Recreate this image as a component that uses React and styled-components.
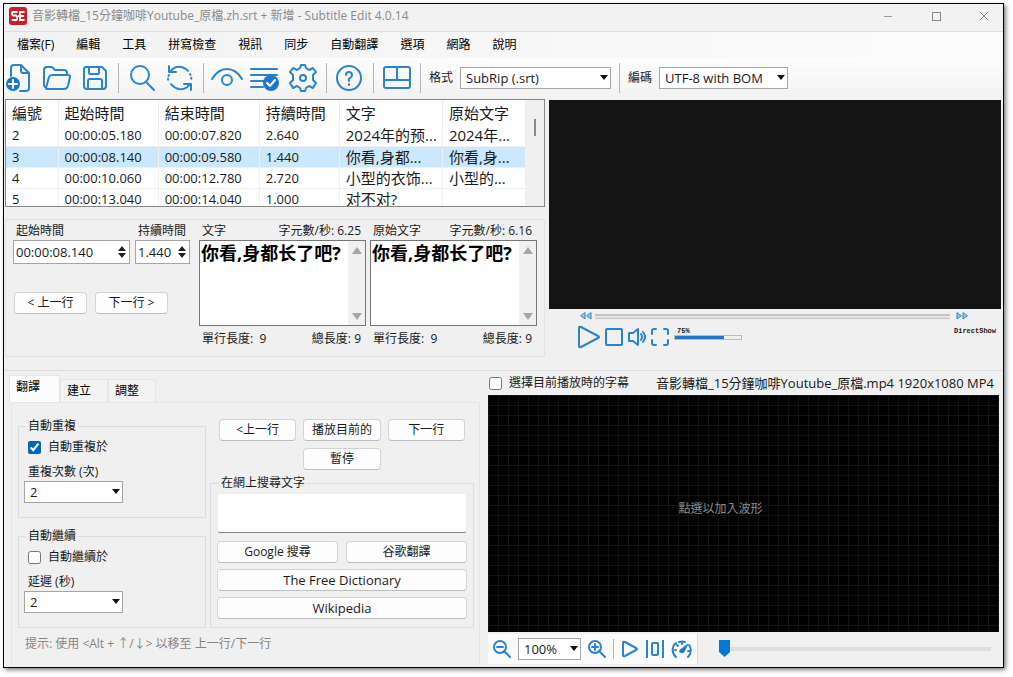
import styled, { createGlobalStyle } from "styled-components";
import { useState } from "react";

const subtitles = [
  { id: 2, start: "00:00:05.180", end: "00:00:07.820", duration: "2.640", text: "2024年的预...", original: "2024年..." },
  { id: 3, start: "00:00:08.140", end: "00:00:09.580", duration: "1.440", text: "你看,身都...", original: "你看,身..." },
  { id: 4, start: "00:00:10.060", end: "00:00:12.780", duration: "2.720", text: "小型的衣饰...", original: "小型的..." },
  { id: 5, start: "00:00:13.040", end: "00:00:14.040", duration: "1.000", text: "对不对?", original: "" },
];

const menuItems = [
  "檔案(F)",
  "編輯",
  "工具",
  "拼寫檢查",
  "視訊",
  "同步",
  "自動翻譯",
  "選項",
  "網路",
  "說明",
];

export default function App() {
  return (
    <>
      <GlobalStyle />
      <Window>
        <WindowTitle />
        <MenuBar>
          {menuItems.map((item) => (
            <MenuItem key={item}>{item}</MenuItem>
          ))}
        </MenuBar>
        <MainToolbar />
        <TopArea>
          <EditorColumn>
            <SubtitleList />
            <LineEditor />
          </EditorColumn>
          <VideoPlayer />
        </TopArea>
        <BottomArea>
          <TabArea />
          <Waveform />
        </BottomArea>
      </Window>
    </>
  );
}

function WindowTitle() {
  return (
    <TitleBar>
      <svg width="18" height="18" viewBox="0 0 18 18">
        <rect width="18" height="18" rx="3" fill="#c8202b" />
        <path
          d="M8.5 5H4.2Q3 5 3 6.5T4.2 8.5H7Q8.3 9 8.3 11T7 13H2.8M15.5 5H11V13H15.5M9 9H15"
          fill="none"
          stroke="#fff"
          strokeWidth="1.8"
        />
      </svg>
      <TitleText>音影轉檔_15分鐘咖啡Youtube_原檔.zh.srt + 新增 - Subtitle Edit 4.0.14</TitleText>
      <WindowButton aria-label="最小化">
        <svg width="10" height="10">
          <path d="M1 5.5H9" stroke="#999" />
        </svg>
      </WindowButton>
      <WindowButton aria-label="最大化">
        <svg width="10" height="10">
          <rect x="1.5" y="1.5" width="8" height="8" fill="none" stroke="#888" />
        </svg>
      </WindowButton>
      <WindowButton aria-label="關閉">
        <svg width="10" height="10">
          <path d="M1 1L9 9M9 1L1 9" stroke="#888" />
        </svg>
      </WindowButton>
    </TitleBar>
  );
}

function MainToolbar() {
  return (
    <Toolbar>
      <ToolButton aria-label="新增">
        <Icon width="30" height="30">
          <path d="M7 13V5Q7 2 10 2H17L25 10V25Q25 28 22 28H16M17 2V8Q17 10 19 10H25" />
          <circle cx="9" cy="21" r="7" fill="#1f77c9" stroke="none" />
          <path d="M9 17V25M5 21H13" stroke="#fff" />
        </Icon>
      </ToolButton>
      <ToolButton aria-label="開啟">
        <Icon width="30" height="30">
          <path d="M4 25Q2 24 2 22V7Q2 4 5 4H10L13 7H22Q25 7 25 10V12M4 25L7 14Q8 12 10 12H26Q28 12 28 14L26 23Q25 26 22 26H5Q4 26 4 25Z" />
        </Icon>
      </ToolButton>
      <ToolButton aria-label="儲存">
        <Icon width="30" height="30">
          <path d="M6 4H22L26 8V23Q26 26 23 26H7Q4 26 4 23V6Q4 4 6 4ZM9 4V10Q9 11 10 11H18Q19 11 19 10V4M8 26V18Q8 16 10 16H20Q22 16 22 18V26" />
        </Icon>
      </ToolButton>
      <Separator />
      <ToolButton aria-label="尋找">
        <Icon width="30" height="30">
          <circle cx="13" cy="12" r="9" />
          <path d="M19 19L27 27" />
        </Icon>
      </ToolButton>
      <ToolButton aria-label="取代">
        <Icon width="30" height="30">
          <path d="M5 9Q9 3 16 4Q21 5 23 8M4 3V9H11M25 21Q21 27 14 26Q9 25 6 21M26 27V21H19" />
          <path d="M25 11Q27 14 26 18M4 12Q2 15 4 19" strokeDasharray="1 3" />
        </Icon>
      </ToolButton>
      <Separator />
      <ToolButton aria-label="視覺同步">
        <Icon width="34" height="30">
          <path d="M2 16Q8 6 17 6T32 16" />
          <circle cx="17" cy="17" r="5" />
        </Icon>
      </ToolButton>
      <ToolButton aria-label="拼寫檢查">
        <Icon width="30" height="30">
          <path d="M1 6H27M1 12H27M1 18H14M1 24H13" />
          <circle cx="21" cy="20" r="8" fill="#1f77c9" stroke="none" />
          <path d="M17 20L20 23L25 17" stroke="#fff" />
        </Icon>
      </ToolButton>
      <ToolButton aria-label="設定">
        <Icon width="30" height="30">
          <path d="M12 5L13 2H17L18 5L21 7L25 5L28 9L25 12V17L28 20L25 25L21 23L18 25L17 28H13L12 25L9 23L5 25L2 20L5 17V12L2 9L5 5L9 7Z" />
          <circle cx="15" cy="15" r="3" />
        </Icon>
      </ToolButton>
      <Separator />
      <ToolButton aria-label="說明">
        <Icon width="30" height="30">
          <circle cx="14" cy="15" r="12" />
          <path d="M11 12Q11 9 14 9T17 12Q17 14 15 15T14 18M14 21V22" />
        </Icon>
      </ToolButton>
      <Separator />
      <ToolButton aria-label="版面配置">
        <Icon width="30" height="30">
          <rect x="2" y="4" width="26" height="21" rx="2" />
          <path d="M2 17H28M15 4V17" />
        </Icon>
      </ToolButton>
      <Separator />
      <ToolLabel htmlFor="format">格式</ToolLabel>
      <Dropdown id="format" width={151} options={["SubRip (.srt)"]} />
      <Separator />
      <ToolLabel htmlFor="encoding">編碼</ToolLabel>
      <Dropdown id="encoding" width={129} options={["UTF-8 with BOM"]} />
    </Toolbar>
  );
}

function Dropdown({ id, width, options, label }) {
  return (
    <SelectBox $width={width}>
      <Select id={id} aria-label={label}>
        {options.map((option) => (
          <option key={option}>{option}</option>
        ))}
      </Select>
    </SelectBox>
  );
}

function SubtitleList() {
  const [selected, setSelected] = useState(3);

  return (
    <ListBox>
      <Table>
        <colgroup>
          <col width="52" />
          <col width="100" />
          <col width="101" />
          <col width="80" />
          <col width="103" />
          <col width="83" />
        </colgroup>
        <thead>
          <tr>
            <HeadCell>編號</HeadCell>
            <HeadCell>起始時間</HeadCell>
            <HeadCell>結束時間</HeadCell>
            <HeadCell>持續時間</HeadCell>
            <HeadCell>文字</HeadCell>
            <HeadCell>原始文字</HeadCell>
          </tr>
        </thead>
        <tbody>
          {subtitles.map((line) => (
            <Row
              key={line.id}
              $selected={line.id === selected}
              onClick={() => setSelected(line.id)}
            >
              <Cell>{line.id}</Cell>
              <Cell>{line.start}</Cell>
              <Cell>{line.end}</Cell>
              <Cell>{line.duration}</Cell>
              <Cell $large>{line.text}</Cell>
              <Cell $large>{line.original}</Cell>
            </Row>
          ))}
        </tbody>
      </Table>
      <ListScroll>
        <ListThumb />
      </ListScroll>
    </ListBox>
  );
}

function LineEditor() {
  return (
    <EditorPanel>
      <TimeColumn>
        <TimeFields>
          <Field $grow={117}>
            <label htmlFor="start">起始時間</label>
            <SpinBox>
              <SpinInput id="start" defaultValue="00:00:08.140" />
              <SpinArrows />
            </SpinBox>
          </Field>
          <Field $grow={55}>
            <label htmlFor="duration">持續時間</label>
            <SpinBox>
              <SpinInput id="duration" defaultValue="1.440" />
              <SpinArrows />
            </SpinBox>
          </Field>
        </TimeFields>
        <StepButtons>
          <Button>&lt; 上一行</Button>
          <Button>下一行 &gt;</Button>
        </StepButtons>
      </TimeColumn>
      <TextField id="text" label="文字" speed="6.25" />
      <TextField id="original" label="原始文字" speed="6.16" />
    </EditorPanel>
  );
}

function SpinArrows() {
  return (
    <svg width="10" height="14">
      <path d="M1 6L5 1L9 6ZM1 8L5 13L9 8Z" fill="#222" />
    </svg>
  );
}

function TextField({ id, label, speed }) {
  return (
    <TextColumn>
      <Between>
        <label htmlFor={id}>{label}</label>
        <span>字元數/秒: {speed}</span>
      </Between>
      <TextBox>
        <TextInput id={id} defaultValue="你看,身都长了吧?" />
        <TextScroll>
          <svg width="10" height="7">
            <path d="M0 7L5 0L10 7Z" fill="#a6a6a6" />
          </svg>
          <svg width="10" height="7">
            <path d="M0 0L5 7L10 0Z" fill="#a6a6a6" />
          </svg>
        </TextScroll>
      </TextBox>
      <Between>
        <span>單行長度: &nbsp;9</span>
        <span>總長度: 9</span>
      </Between>
    </TextColumn>
  );
}

function VideoPlayer() {
  return (
    <Player>
      <Screen />
      <SeekRow>
        <PlainButton aria-label="倒轉">
          <Icon width="12" height="8">
            <path d="M5 1V7L1 4ZM11 1V7L7 4Z" strokeWidth="1" fill="#9cc9ee" />
          </Icon>
        </PlainButton>
        <SeekBar aria-label="播放位置" defaultValue="0" />
        <PlainButton aria-label="快轉">
          <Icon width="12" height="8">
            <path d="M1 1V7L5 4ZM7 1V7L11 4Z" strokeWidth="1" fill="#9cc9ee" />
          </Icon>
        </PlainButton>
      </SeekRow>
      <PlayRow>
        <PlainButton aria-label="播放">
          <Icon width="22" height="24">
            <path d="M1 3Q1 1 3 2L20 11Q22 12 20 13L3 22Q1 23 1 21Z" />
          </Icon>
        </PlainButton>
        <PlainButton aria-label="停止">
          <Icon width="18" height="24">
            <rect x="1" y="4" width="16" height="16" rx="1" />
          </Icon>
        </PlainButton>
        <PlainButton aria-label="靜音">
          <Icon width="18" height="24">
            <path d="M10 4V20L5 16H1V8H5ZM13 9Q15 12 13 15M15 7Q19 12 15 17" />
          </Icon>
        </PlainButton>
        <PlainButton aria-label="全螢幕">
          <Icon width="18" height="24">
            <path d="M1 9V6Q1 4 3 4H5M13 4H15Q17 4 17 6V9M17 15V18Q17 20 15 20H13M5 20H3Q1 20 1 18V15" />
          </Icon>
        </PlainButton>
        <VolumeBox>
          <label htmlFor="volume">75%</label>
          <Volume id="volume" defaultValue="75" />
        </VolumeBox>
        <Engine>DirectShow</Engine>
      </PlayRow>
    </Player>
  );
}

function TabArea() {
  return (
    <TabColumn>
      <Tabs role="tablist">
        <Tab role="tab" aria-selected="true" $active>
          翻譯
        </Tab>
        <Tab role="tab">建立</Tab>
        <Tab role="tab">調整</Tab>
      </Tabs>
      <TabPanel>
        <PanelColumns>
          <OptionColumn>
            <Group>
              <legend>自動重複</legend>
              <CheckLabel>
                <Checkbox defaultChecked />
                自動重複於
              </CheckLabel>
              <GroupLabel htmlFor="repeat">重複次數 (次)</GroupLabel>
              <Dropdown id="repeat" width={99} options={["2"]} />
            </Group>
            <Group>
              <legend>自動繼續</legend>
              <CheckLabel>
                <Checkbox />
                自動繼續於
              </CheckLabel>
              <GroupLabel htmlFor="delay">延遲 (秒)</GroupLabel>
              <Dropdown id="delay" width={99} options={["2"]} />
            </Group>
          </OptionColumn>
          <ActionColumn>
            <PlayButtons>
              <Button>&lt;上一行</Button>
              <Button>播放目前的</Button>
              <Button>下一行</Button>
              <PauseButton>暫停</PauseButton>
            </PlayButtons>
            <SearchGroup>
              <legend>在網上搜尋文字</legend>
              <SearchGrid>
                <SearchInput aria-label="在網上搜尋文字" />
                <Button>Google 搜尋</Button>
                <Button>谷歌翻譯</Button>
                <WideButton>The Free Dictionary</WideButton>
                <WideButton>Wikipedia</WideButton>
              </SearchGrid>
            </SearchGroup>
          </ActionColumn>
        </PanelColumns>
        <Hint>提示: 使用 &lt;Alt + ↑/↓&gt; 以移至 上一行/下一行</Hint>
      </TabPanel>
    </TabColumn>
  );
}

function Waveform() {
  return (
    <WaveColumn>
      <WaveHeader>
        <WaveCheck>
          <Checkbox />
          選擇目前播放時的字幕
        </WaveCheck>
        <VideoName>音影轉檔_15分鐘咖啡Youtube_原檔.mp4 1920x1080 MP4</VideoName>
      </WaveHeader>
      <WaveCanvas>點選以加入波形</WaveCanvas>
      <WaveFooter>
        <WaveTools>
          <PlainButton aria-label="縮小">
            <Icon width="18" height="18">
              <circle cx="7" cy="7" r="6" />
              <path d="M11 11L17 17M4 7H10" />
            </Icon>
          </PlainButton>
          <Dropdown label="縮放" width={63} options={["100%"]} />
          <PlainButton aria-label="放大">
            <Icon width="18" height="18">
              <circle cx="7" cy="7" r="6" />
              <path d="M11 11L17 17M4 7H10M7 4V10" />
            </Icon>
          </PlainButton>
          <ShortSeparator />
          <PlainButton aria-label="播放">
            <Icon width="18" height="18">
              <path d="M2 3Q2 1 4 2L15 8Q17 9 15 10L4 16Q2 17 2 15Z" />
            </Icon>
          </PlainButton>
          <PlainButton aria-label="置中">
            <Icon width="18" height="18">
              <path d="M1 0V18M17 0V18" />
              <rect x="6" y="3" width="6" height="12" rx="1" />
            </Icon>
          </PlainButton>
          <PlainButton aria-label="播放速度">
            <Icon width="22" height="18">
              <path d="M5 17A9 9 0 0 1 5 3M8 2A9 9 0 0 1 14 2M18 5A9 9 0 0 1 17 17M4 10H5M17 11H18M6 5L7 6M11 2V4" />
              <path d="M9 10L17 4L13 12Q11 14 9 12Z" fill="#1f77c9" strokeWidth="1" />
            </Icon>
          </PlainButton>
        </WaveTools>
        <Position aria-label="位置" defaultValue="0" />
      </WaveFooter>
    </WaveColumn>
  );
}

const GlobalStyle = createGlobalStyle`
  * {
    box-sizing: border-box;
  }

  body {
    margin: 0;
    padding: 3px 9px 9px 3px;
    background-color: #ffffff;
  }

  body, button, input, select, textarea {
    font-family: "Open Sans", "Noto Sans CJK TC", sans-serif;
    font-size: 12px;
    line-height: 16px;
    color: #1a1a1a;
  }

  svg {
    display: block;
    flex-shrink: 0;
  }
`;

const Window = styled.main`
  display: flex;
  flex-direction: column;
  min-height: calc(100vh - 12px);
  border: 1px solid #000000;
  background-color: #f0f0f0;
  box-shadow: 2px 2px 4px #00000080;
`;

const TitleBar = styled.header`
  display: flex;
  align-items: center;
  height: 28px;
  padding: 0 0 4px 5px;
  border-bottom: 1px solid #dedede;
  background-color: #f2f2f2;
`;

const TitleText = styled.span`
  flex: 1;
  margin-left: 5px;
  color: #8a8a8a;
  white-space: nowrap;
`;

const WindowButton = styled.button`
  display: flex;
  align-items: center;
  justify-content: center;
  width: 48px;
  height: 24px;
  padding: 0 0 0 10px;
  border: none;
  background: none;
`;

const MenuBar = styled.nav`
  display: flex;
  align-items: center;
  height: 26px;
  padding-left: 2px;
  background: linear-gradient(90deg, #f2f2f2, #fcfcfc);
`;

const MenuItem = styled.button`
  padding: 0 11px;
  border: none;
  background: none;
  color: #000000;
  white-space: nowrap;
`;

const Toolbar = styled.div`
  display: flex;
  align-items: center;
  gap: 8px;
  height: 41px;
  padding-bottom: 2px;
  background: linear-gradient(180deg, #fdfdfd, #f2f2f2);
`;

const ToolButton = styled.button`
  display: flex;
  align-items: center;
  justify-content: center;
  width: 30px;
  height: 32px;
  padding: 0;
  border: none;
  background: none;
`;

const PlainButton = styled.button`
  padding: 0;
  border: none;
  background: none;
`;

const Icon = styled.svg`
  fill: none;
  stroke: #2b83cc;
  stroke-width: 2;
  stroke-linejoin: round;
  stroke-linecap: round;
`;

const Separator = styled.div`
  width: 1px;
  height: 30px;
  background-color: #b4b4b4;
`;

const ShortSeparator = styled(Separator)`
  height: 20px;
`;

const ToolLabel = styled.label`
  margin-right: -1px;
`;

const SelectBox = styled.div`
  position: relative;
  width: ${(props) => props.$width}px;
  height: 22px;

  &::after {
    content: "";
    position: absolute;
    top: 8px;
    right: 3px;
    border: 4px solid transparent;
    border-top: 5px solid #111111;
    border-bottom: none;
    pointer-events: none;
  }
`;

const Select = styled.select`
  appearance: none;
  display: block;
  width: 100%;
  height: 100%;
  padding: 0 5px;
  border: 1px solid #a5a5a5;
  border-radius: 0;
  background-color: #ffffff;
  font-size: 13px;
`;

const TopArea = styled.section`
  display: flex;
  gap: 4px;
  height: 272px;
  padding: 0 2px 0 1px;
  border-bottom: 1px solid #dedede;
`;

const EditorColumn = styled.div`
  display: flex;
  flex-direction: column;
  gap: 12px;
  flex: 0 0 540px;
  min-width: 0;
`;

const ListBox = styled.div`
  display: flex;
  height: 108px;
  border: 1px solid #868686;
  background-color: #ffffff;
  overflow: hidden;
`;

const Table = styled.table`
  flex: 1;
  min-width: 0;
  table-layout: fixed;
  border-collapse: collapse;
  align-self: flex-start;
`;

const HeadCell = styled.th`
  height: 25px;
  padding: 0 0 0 6px;
  border-right: 1px solid #ececec;
  font-size: 15px;
  font-weight: normal;
  text-align: left;
  white-space: nowrap;
`;

const Row = styled.tr`
  background-color: ${(props) => (props.$selected ? "#cce8ff" : "#ffffff")};
`;

const Cell = styled.td`
  height: 21px;
  padding: 0 0 0 6px;
  border-right: 1px solid #f0f0f0;
  border-bottom: 1px solid #f0f0f0;
  font-size: ${(props) => (props.$large ? "15px" : "13px")};
  white-space: nowrap;
`;

const ListScroll = styled.div`
  display: flex;
  justify-content: center;
  flex: 0 0 18px;
  padding-top: 19px;
  background-color: #f0f0f0;
`;

const ListThumb = styled.div`
  width: 2px;
  height: 17px;
  background-color: #8a8a8a;
`;

const EditorPanel = styled.div`
  display: flex;
  gap: 4px;
  height: 138px;
  padding: 3px 7px;
  border: 1px solid #e2e2e2;
`;

const TimeColumn = styled.div`
  display: flex;
  flex-direction: column;
  gap: 28px;
  flex: 0 0 177px;
  min-width: 0;
  margin-right: 5px;
`;

const TimeFields = styled.div`
  display: flex;
  gap: 5px;
`;

const Field = styled.div`
  display: flex;
  flex-direction: column;
  gap: 1px;
  flex: ${(props) => props.$grow} 1 0;
  min-width: 0;

  label {
    padding-left: 3px;
    white-space: nowrap;
  }
`;

const SpinBox = styled.div`
  display: flex;
  align-items: center;
  height: 24px;
  padding-right: 2px;
  border: 1px solid #a5a5a5;
  background-color: #ffffff;
`;

const SpinInput = styled.input`
  flex: 1;
  min-width: 0;
  padding: 0 2px;
  border: none;
  background: none;
  outline: none;
  font-size: 13px;
`;

const StepButtons = styled.div`
  display: flex;
  gap: 8px;
  padding-left: 1px;

  button {
    width: 73px;
  }
`;

const Button = styled.button`
  height: 22px;
  padding: 0;
  border: 1px solid #d4d4d4;
  border-bottom-color: #bdbdbd;
  border-radius: 4px;
  background-color: #fdfdfd;
  font-size: 12px;
  white-space: nowrap;
`;

const TextColumn = styled.div`
  display: flex;
  flex-direction: column;
  gap: 1px;
  flex: 1;
  min-width: 0;
`;

const Between = styled.div`
  display: flex;
  justify-content: space-between;
  padding: 0 5px 0 3px;
  white-space: nowrap;
`;

const TextBox = styled.div`
  display: flex;
  height: 86px;
  margin-bottom: 4px;
  border: 1px solid #767676;
  background-color: #ffffff;
`;

const TextInput = styled.textarea`
  flex: 1;
  min-width: 0;
  padding: 0 1px;
  border: none;
  outline: none;
  resize: none;
  overflow: hidden;
  font-family: "Open Sans", "Noto Sans CJK SC", sans-serif;
  font-size: 18px;
  font-weight: bold;
  line-height: 24px;
  color: #000000;
  white-space: nowrap;
`;

const TextScroll = styled.div`
  display: flex;
  flex-direction: column;
  justify-content: space-between;
  align-items: center;
  flex: 0 0 17px;
  padding: 6px 0 5px;
  background-color: #f0f0f0;
`;

const Player = styled.div`
  flex: 1;
  min-width: 0;
`;

const Screen = styled.div`
  height: 209px;
  margin-top: 1px;
  background-color: #141414;
`;

const SeekRow = styled.div`
  display: flex;
  align-items: center;
  gap: 3px;
  height: 14px;
  padding: 0 33px 0 31px;
`;

const Range = styled.input.attrs({ type: "range" })`
  appearance: none;
  flex: 1;
  min-width: 0;
  height: 5px;
  margin: 0;

  &::-webkit-slider-thumb {
    appearance: none;
    width: 0;
    height: 0;
  }
`;

const SeekBar = styled(Range)`
  margin-right: 3px;
  border: 1px solid #c4c4c4;
  border-width: 2px 0 1px;
  background-color: #e4e4e4;
`;

const PlayRow = styled.div`
  display: flex;
  align-items: center;
  gap: 5px;
  padding: 2px 5px 0 29px;
`;

const VolumeBox = styled.div`
  display: flex;
  flex-direction: column;
  width: 68px;
  padding-bottom: 7px;
  font: bold 7px/8px "Liberation Mono", monospace;

  label {
    padding-left: 3px;
  }
`;

const Volume = styled(Range)`
  flex: none;
  width: 68px;
  border: 1px solid #bcbcbc;
  background: linear-gradient(90deg, #1f77c9 75%, #efefef 75%);
`;

const Engine = styled.span`
  margin: 0 0 12px auto;
  font: bold 7px/8px "Liberation Mono", monospace;
`;

const BottomArea = styled.section`
  display: flex;
  gap: 8px;
  flex: 1;
  padding: 4px 4px 2px 5px;
`;

const TabColumn = styled.div`
  display: flex;
  flex-direction: column;
  flex: 0 0 471px;
`;

const Tabs = styled.div`
  display: flex;
  align-items: flex-end;
  height: 27px;
`;

const Tab = styled.button`
  width: ${(props) => (props.$active ? "51px" : "48px")};
  height: ${(props) => (props.$active ? "27px" : "23px")};
  padding: 0 0 ${(props) => (props.$active ? "4px" : "0")} 6px;
  border: 1px solid #e6e6e6;
  border-bottom: none;
  background-color: ${(props) => (props.$active ? "#fcfcfc" : "#f3f3f3")};
  color: #000000;
  text-align: left;
`;

const TabPanel = styled.div`
  display: flex;
  flex-direction: column;
  gap: 8px;
  flex: 1;
  margin-left: 2px;
  padding: 15px 5px 0 6px;
  border: 1px solid #e6e6e6;
  border-bottom: none;
`;

const PanelColumns = styled.div`
  display: flex;
  gap: 4px;
`;

const OptionColumn = styled.div`
  display: flex;
  flex-direction: column;
  gap: 10px;
  flex: 0 0 188px;
`;

const Group = styled.fieldset`
  height: 100px;
  min-width: 0;
  margin: 0;
  padding: 4px 5px 0;
  border: 1px solid #dcdcdc;

  legend {
    height: 16px;
    margin-left: 2px;
    padding: 0 2px;
  }
`;

const CheckLabel = styled.label`
  display: flex;
  align-items: center;
  gap: 7px;
  height: 18px;
  padding-left: 4px;
`;

const Checkbox = styled.input.attrs({ type: "checkbox" })`
  width: 13px;
  height: 13px;
  margin: 0;
  accent-color: #0067c0;
`;

const GroupLabel = styled.label`
  display: block;
  margin: 8px 0 1px;
  padding-left: 4px;
`;

const ActionColumn = styled.div`
  display: flex;
  flex-direction: column;
  justify-content: space-between;
  flex: 1;
  min-width: 0;
`;

const PlayButtons = styled.div`
  display: grid;
  grid-template-columns: repeat(3, 1fr);
  gap: 7px;
  padding: 1px 9px 0;
`;

const PauseButton = styled(Button)`
  grid-column: 2;
`;

const SearchGroup = styled(Group)`
  height: auto;
  padding: 2px 6px 8px;
`;

const SearchGrid = styled.div`
  display: grid;
  grid-template-columns: 1fr 1fr;
  gap: 6px 8px;
`;

const SearchInput = styled.textarea`
  grid-column: 1 / -1;
  height: 40px;
  margin-bottom: 2px;
  border: 1px solid #ececec;
  border-bottom-color: #868686;
  border-radius: 3px;
  background-color: #ffffff;
  resize: none;
`;

const WideButton = styled(Button)`
  grid-column: 1 / -1;
  font-size: 13px;
`;

const Hint = styled.p`
  margin: 0;
  padding-left: 7px;
  color: #848484;
`;

const WaveColumn = styled.div`
  display: flex;
  flex-direction: column;
  flex: 1;
  min-width: 0;
`;

const WaveHeader = styled.div`
  display: flex;
  justify-content: space-between;
  align-items: center;
  height: 20px;
  padding: 0 5px 4px 1px;
  white-space: nowrap;
`;

const WaveCheck = styled(CheckLabel)`
  height: 16px;
  padding-left: 0;
`;

const VideoName = styled.span`
  font-size: 13px;
`;

const WaveCanvas = styled.div`
  display: flex;
  align-items: center;
  justify-content: center;
  flex: 1;
  min-height: 237px;
  padding: 0 46px 10px 0;
  background-color: #000000;
  background-image: linear-gradient(#121212 1px, transparent 1px),
    linear-gradient(90deg, #121212 1px, transparent 1px);
  background-size: 10px 10px;
  color: #8c8c8c;
`;

const WaveFooter = styled.div`
  display: flex;
  align-items: flex-start;
  gap: 21px;
  height: 33px;
  padding: 2px 8px 0 0;
`;

const WaveTools = styled.div`
  display: flex;
  align-items: center;
  gap: 7px;
  height: 30px;
  padding: 0 4px 0 5px;
  border-right: 1px solid #dcdcdc;
  background-color: #fafafa;
`;

const Position = styled(Range)`
  height: 17px;
  margin-top: 6px;
  background: linear-gradient(#dedede, #dedede) center / 100% 4px no-repeat;

  &::-webkit-slider-thumb {
    width: 11px;
    height: 17px;
    background-color: #0078d7;
    clip-path: polygon(0 0, 100% 0, 100% 70%, 50% 100%, 0 70%);
  }
`;
